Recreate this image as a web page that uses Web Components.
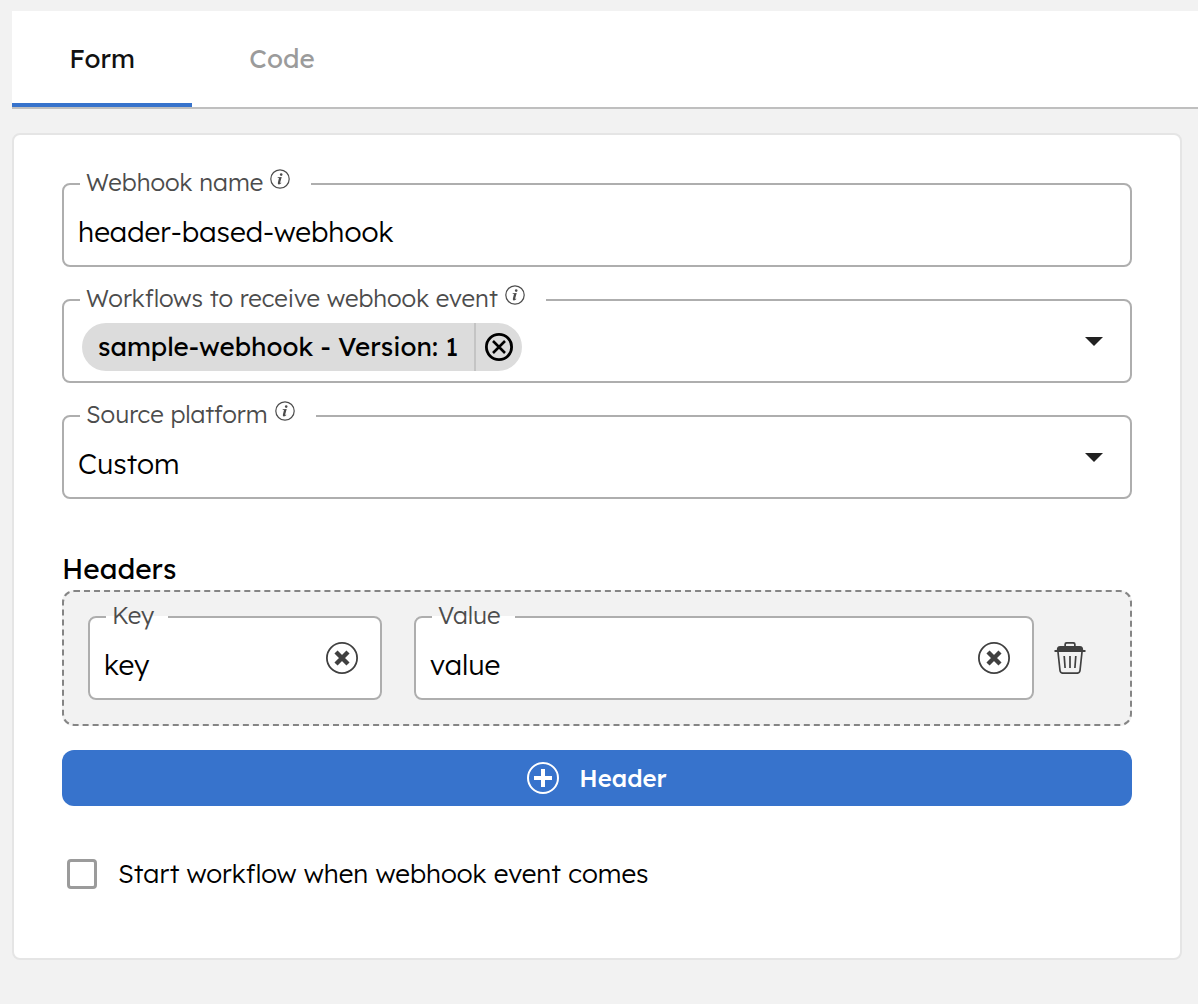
<!DOCTYPE html>
<html lang="en">
<head>
<meta charset="utf-8">
<meta name="viewport" content="width=device-width, initial-scale=1">
<title>Webhook form</title>
<style>
  body {
    margin: 0;
    background: #f2f2f2;
    color: #000;
    font-family: Lexend, Inter, "Liberation Sans", sans-serif;
    font-weight: 300;
  }
</style>
</head>
<body>
<webhook-page></webhook-page>

<script>
const base = `<style>
  :host { display: block; box-sizing: border-box; }
  *, *::before, *::after { box-sizing: border-box; }
  button, input, select { font: inherit; color: inherit; margin: 0; padding: 0; border: 0; background: none; }
  button { cursor: pointer; }
  svg { display: block; }
</style>`;

function define(name, markup, setup) {
  const template = document.createElement('template');
  template.innerHTML = base + markup;
  customElements.define(name, class extends HTMLElement {
    constructor() {
      super();
      this.attachShadow({ mode: 'open' }).append(template.content.cloneNode(true));
    }
    connectedCallback() {
      if (setup) setup.call(this, this.shadowRoot);
    }
  });
}

/* Icons, picked with the name attribute */
const icons = {
  info: [20, 20, `<circle cx="10" cy="10" r="9.2" fill="none" stroke="currentColor" stroke-width="1.2"/>
    <circle cx="11.2" cy="5.6" r="1.3"/><path d="M7.800 8.300 11.700 7.900 10.100 13.700q-.1.700.9-.1l.4.4q-1.500 1.700-2.800 1.400-1.100-.3-.7-1.800L9 9.100H7.600z"/>`],
  clear: [32, 32, `<circle cx="16" cy="16" r="15.1" fill="none" stroke="currentColor" stroke-width="1.8"/>
    <path d="m10 10 12 12M22 10 10 22" fill="none" stroke="currentColor" stroke-width="4.4"/>`],
  remove: [28, 28, `<g fill="none" stroke="currentColor" stroke-width="2.8"><circle cx="14" cy="14" r="12.6"/>
    <path d="m8 8 12 12M20 8 8 20" stroke-width="2.6"/></g>`],
  add: [32, 32, `<circle cx="16" cy="16" r="15" fill="none" stroke="currentColor" stroke-width="2"/>
    <path d="M16 7v18M7 16h18" fill="none" stroke="currentColor" stroke-width="4"/>`],
  trash: [32, 32, `<path d="M.5 8h2.3c0-2.6 1-4 3.400-4h4.100V2.200Q10.300 0 12.500 0h7q2.200 0 2.200 2.200V4h4.100c2.400 0 3.400 1.400 3.400 4h2.300v2H.5zM12 4h8V2.600q0-.9-.9-.9h-6.200q-.9 0-.9.9z"/>
    <path d="M4 10 6 28.500Q6.300 31.200 9 31.200h14q2.700 0 3-2.700L28 10" fill="none" stroke="currentColor" stroke-width="1.700"/>
    <path d="m10.200 14 .9 12M16 14v12M21.800 14l-.9 12" fill="none" stroke="currentColor" stroke-width="1.700"/>`],
  caret: [18, 9, `<path d="M0 0h18L9 9z"/>`]
};
define('app-icon', `<style>:host { flex: none; }</style>`, function (root) {
  const [w, h, shape] = icons[this.getAttribute('name')];
  if (!root.querySelector('svg'))
    root.innerHTML += `<svg width="${w}" height="${h}" viewBox="0 0 ${w} ${h}" fill="currentColor" aria-hidden="true">${shape}</svg>`;
});

define('tab-bar', `<style>
  :host { background: #fff; border-bottom: 2px solid #bfbfbf; }
  div { display: flex; }
  button { width: 180px; height: 96px; padding-top: 2px; border-bottom: 4px solid transparent; font-size: 26px; font-weight: 400; color: #9b9b9b; }
  button[aria-selected="true"] { color: #111; border-color: #3773cc; }
</style>
<div role="tablist">
  <button role="tab" aria-selected="true">Form</button>
  <button role="tab" aria-selected="false">Code</button>
</div>`);

/* Outlined box whose label sits in a notch of the top border */
const outline = `<style>
  fieldset { margin: 0; min-width: 0; padding: 0 14px; border: 2px solid #aeaeae; border-radius: 8px; background: #fff; }
  legend { display: flex; align-items: center; gap: 7px; height: 34px; margin-left: 2px; padding: 0 14px 0 6px; font-size: 24px; color: #4c4c4c; }
  label { padding-bottom: 4px; }
  legend app-icon { padding-bottom: 10px; margin-right: 7px; }
  .row { display: flex; align-items: center; height: 64px; }
  input, select { flex: 1; width: 100%; min-width: 0; height: 64px; padding-bottom: 4px; outline: 0; appearance: none; font-size: 28px; }
  .end { padding: 0 8px 16px; color: #404040; }
  .caret { color: #212121; padding-right: 13px; }
  [hidden] { display: none; }
</style>`;

define('text-field', outline + `
<fieldset>
  <legend><label for="box"></label><app-icon name="info"></app-icon></legend>
  <div class="row"><input id="box" type="text"><button class="end" aria-label="Clear"><app-icon name="clear"></app-icon></button></div>
</fieldset>`, function (root) {
  root.querySelector('label').textContent = this.getAttribute('label');
  root.querySelector('input').value = this.getAttribute('value');
  root.querySelector('legend app-icon').hidden = !this.hasAttribute('info');
  root.querySelector('button').hidden = !this.hasAttribute('clearable');
  root.querySelector('button').onclick = () => { root.querySelector('input').value = ''; };
});

define('select-field', outline + `<style>
  .row { display: grid; grid-template-columns: 1fr auto; }
  select { grid-area: 1 / 1 / 2 / 3; }
  .caret { grid-area: 1 / 2; pointer-events: none; }
</style>
<fieldset>
  <legend><label for="box"></label><app-icon name="info"></app-icon></legend>
  <div class="row"><select id="box"></select><app-icon class="end caret" name="caret"></app-icon></div>
</fieldset>`, function (root) {
  root.querySelector('label').textContent = this.getAttribute('label');
  root.querySelector('select').replaceChildren(new Option(this.getAttribute('value')));
});

define('value-chip', `<style>
  :host { display: flex; height: 48px; border-radius: 24px; background: #dcdcdc; font-size: 26px; font-weight: 400; overflow: hidden; white-space: nowrap; }
  span { display: flex; align-items: center; padding: 0 16px 2px; }
  button { padding: 0 9px; border-left: 2px solid #c4c4c4; }
</style>
<span><slot></slot></span><button aria-label="Remove"><app-icon name="remove"></app-icon></button>`, function (root) {
  root.querySelector('button').onclick = () => this.remove();
});

define('chips-field', outline + `<style>
  .chips { display: flex; padding: 0 4px 4px; }
</style>
<fieldset>
  <legend><label for="box"></label><app-icon name="info"></app-icon></legend>
  <div class="row"><div class="chips"><slot></slot></div><input id="box" type="text" role="combobox" aria-expanded="false"><button class="end caret" aria-label="Open"><app-icon name="caret"></app-icon></button></div>
</fieldset>`, function (root) {
  root.querySelector('label').textContent = this.getAttribute('label');
});

define('header-row', `<style>
  :host { display: flex; padding: 8px 24px 24px; border: 2px dashed #858585; border-radius: 12px; background: #f2f2f2; }
  .fields { flex: 1; display: grid; grid-template-columns: repeat(3, minmax(0, 1fr)); column-gap: 32px; }
  .wide { grid-column: span 2; }
  button { padding: 16px 20px 0; color: #404040; }
</style>
<div class="fields">
  <text-field label="Key" value="key" clearable></text-field>
  <text-field class="wide" label="Value" value="value" clearable></text-field>
</div>
<button aria-label="Delete header"><app-icon name="trash"></app-icon></button>`);

define('add-button', `<style>
  button { display: flex; align-items: center; justify-content: center; gap: 20px; width: 100%; height: 56px; border-radius: 12px; background: #3773cc; color: #fff; font-size: 24px; font-weight: 500; }
</style>
<button><app-icon name="add"></app-icon><slot></slot></button>`);

define('check-box', `<style>
  label { display: flex; align-items: center; gap: 21px; height: 48px; padding-left: 5px; font-size: 26px; }
  span { padding-bottom: 2px; }
  input { appearance: none; width: 30px; height: 30px; border: 3px solid #9b9b9b; border-radius: 4px; }
  input:checked { background: #3773cc; border-color: #3773cc; }
</style>
<label><input type="checkbox"><span><slot></slot></span></label>`);

define('webhook-page', `<style>
  :host { padding: 11px 0 44px 12px; }
  form { margin: 24px 16px 0 0; padding: 32px 48px 60px; border: 2px solid #e5e5e5; border-radius: 8px; background: #fff; }
  .fields { display: grid; gap: 16px; }
  h2 { margin: 52px 0 3px; font-size: 28px; line-height: 36px; font-weight: 400; }
  add-button { margin: 24px 0 44px; }
</style>
<tab-bar></tab-bar>
<form onsubmit="return false">
  <div class="fields">
    <text-field label="Webhook name" value="header-based-webhook" info></text-field>
    <chips-field label="Workflows to receive webhook event"><value-chip>sample-webhook - Version: 1</value-chip></chips-field>
    <select-field label="Source platform" value="Custom"></select-field>
  </div>
  <h2>Headers</h2>
  <header-row></header-row>
  <add-button>Header</add-button>
  <check-box>Start workflow when webhook event comes</check-box>
</form>`);
</script>
</body>
</html>
